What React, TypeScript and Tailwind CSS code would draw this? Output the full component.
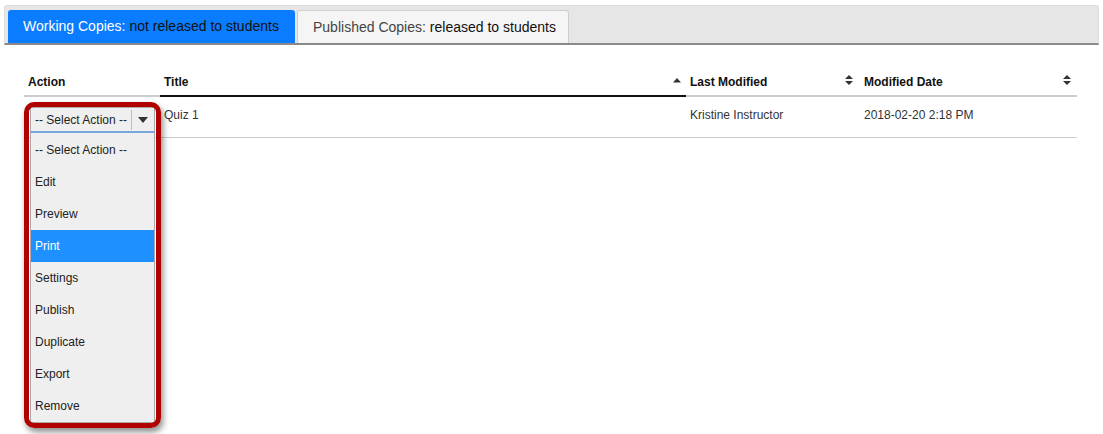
import * as React from "react";

const ITEMS = [
  "-- Select Action --",
  "Edit",
  "Preview",
  "Print",
  "Settings",
  "Publish",
  "Duplicate",
  "Export",
  "Remove",
];

function SortUp() {
  return (
    <svg width="8" height="6" viewBox="0 0 8 6" className="shrink-0">
      <path d="M0 5.5 L4 1 L8 5.5 Z" fill="#333" />
    </svg>
  );
}

function SortBoth() {
  return (
    <svg width="8" height="10" viewBox="0 0 8 10" className="shrink-0">
      <path d="M0 4 L4 0 L8 4 Z" fill="#333" />
      <path d="M0 6 L4 10 L8 6 Z" fill="#333" />
    </svg>
  );
}

export default function App() {
  return (
    <div
      className="relative w-[1103px] h-[434px] overflow-hidden bg-white text-[#333]"
      style={{ fontFamily: '"Liberation Sans", Arial, sans-serif' }}
    >
      {/* tabs */}
      <div className="mx-[4px] mt-[5px] h-[40px] bg-[#e6e6e6] rounded-t-[3px] border border-[#dcdcdc] border-b-2 border-b-[#8a8a8a] flex items-end pl-[3px] gap-[2px]">
        <div className="h-[33px] w-[287px] bg-[#0a7cff] rounded-t-[3px] flex items-center pl-[15px] text-[14px]">
          <span className="text-white">Working Copies:</span>
          <span className="text-[#111] ml-[4px]">not released to students</span>
        </div>
        <div className="h-[33px] w-[272px] bg-[#f5f5f5] border border-[#cfcfcf] border-b-0 rounded-t-[3px] flex items-center pl-[15px] text-[14px]">
          <span className="text-[#444]">Published Copies:</span>
          <span className="text-[#111] ml-[4px]">released to students</span>
        </div>
      </div>

      {/* table */}
      <div className="ml-[24px] mt-[25px] w-[1053px] text-[12px]">
        <div className="flex h-[27px] font-bold text-[#111]">
          <div className="w-[136px] pl-[4px] pt-[3px] border-b-2 border-[#cccccc]">Action</div>
          <div className="w-[526px] pl-[4px] pr-[5px] pt-[3px] border-b-2 border-[#111] flex justify-between">
            <span>Title</span>
            <span className="pt-[4px]"><SortUp /></span>
          </div>
          <div className="w-[174px] pl-[4px] pr-[7px] pt-[3px] border-b-2 border-[#cccccc] flex justify-between">
            <span>Last Modified</span>
            <span className="pt-[2px]"><SortBoth /></span>
          </div>
          <div className="flex-1 pl-[4px] pr-[6px] pt-[3px] border-b-2 border-[#cccccc] flex justify-between">
            <span>Modified Date</span>
            <span className="pt-[2px]"><SortBoth /></span>
          </div>
        </div>
        <div className="flex h-[41px] border-b border-[#cccccc] text-[#333]">
          <div className="w-[136px] pl-[6px] pt-[10px] relative">
            <div className="w-[125px] h-[26px] bg-[#efefef] border border-[#aaa] border-b-2 border-b-[#7aa6dc] flex items-center">
              <span className="pl-[4px] flex-1 text-[#222]">-- Select Action --</span>
              <span className="w-px h-[20px] bg-[#bbb]" />
              <span className="w-[22px] flex justify-center">
                <svg width="10" height="6" viewBox="0 0 10 6">
                  <path d="M0 0 L10 0 L5 6 Z" fill="#333" />
                </svg>
              </span>
            </div>
            {/* open list */}
            <div className="absolute left-[6px] top-[36px] w-[125px] pt-[1px] bg-[#efefef] border border-[#aaa] border-t-0 z-10">
              {ITEMS.map((item) => (
                <div
                  key={item}
                  className={
                    item === "Print"
                      ? "h-[32px] flex items-center pl-[4px] bg-[#1e90ff] text-white"
                      : "h-[32px] flex items-center pl-[4px] text-[#222]"
                  }
                >
                  {item}
                </div>
              ))}
            </div>
          </div>
          <div className="w-[526px] pl-[4px] pt-[9px]">Quiz 1</div>
          <div className="w-[174px] pl-[4px] pt-[9px]">Kristine Instructor</div>
          <div className="flex-1 pl-[4px] pt-[9px]">2018-02-20 2:18 PM</div>
        </div>
      </div>

      {/* highlight annotation */}
      <div className="absolute left-[24px] top-[102px] w-[137px] h-[326px] border-[5px] border-[#b00000] rounded-[10px] shadow-[2px_4px_6px_rgba(0,0,0,0.45)] z-20" />
    </div>
  );
}
